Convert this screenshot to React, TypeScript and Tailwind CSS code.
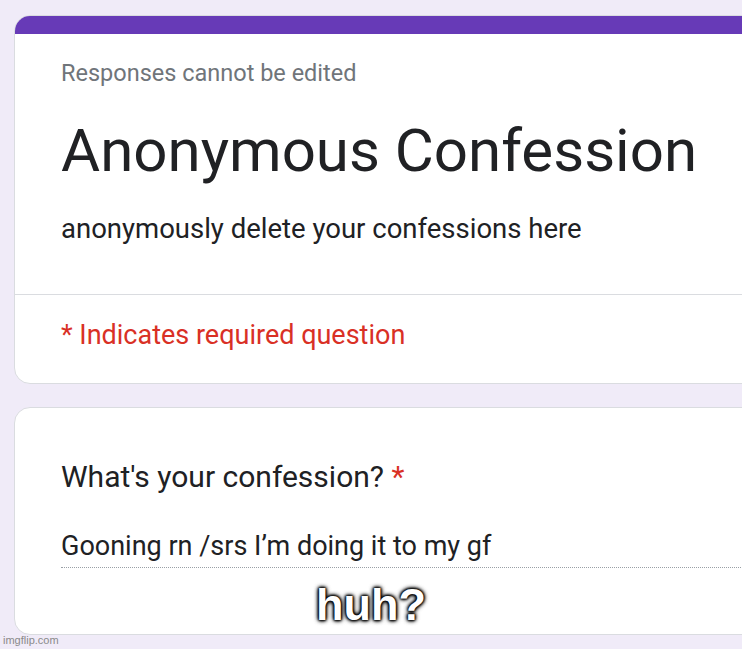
import React from 'react';

const HeaderCard = () => (
  <div className="w-[780px] bg-white border border-[#dadce0] rounded-[16px] overflow-hidden">
    <div className="h-[19px] bg-[#673ab7] -mx-px -mt-px" />
    <div className="pl-[46px] pt-[25px] pb-[48px]">
      <p className="text-[23.5px] leading-[28px] text-[#70757a]">Responses cannot be edited</p>
      <h1 className="mt-[28px] text-[60px] leading-[72px] text-[#202124]">Anonymous Confession</h1>
      <p className="mt-[25px] text-[27.5px] leading-[34px] text-[#202124]">anonymously delete your confessions here</p>
    </div>
    <div className="border-t border-[#dadce0] pl-[46px] pt-[23px] pb-[31px]">
      <p className="text-[27px] leading-[34px] text-[#d93025]">* Indicates required question</p>
    </div>
  </div>
);

const QuestionCard = () => (
  <div className="w-[780px] bg-white border border-[#dadce0] rounded-[16px] pl-[46px] pt-[51px] pb-[66px]">
    <p className="text-[30px] leading-[36px] text-[#202124]">
      What's your confession? <span className="text-[#d93025]">*</span>
    </p>
    <div className="mt-[35px] border-b border-dotted border-[#9aa0a6] pb-[5px]">
      <p className="text-[27px] leading-[32px] text-[#202124]">Gooning rn /srs I’m doing it to my gf</p>
    </div>
  </div>
);

export default function App() {
  return (
    <div className="relative w-[742px] h-[649px] overflow-hidden bg-[#f0ebf8] font-['Roboto',sans-serif]">
      <div className="pl-[14px] pt-[15px] flex flex-col gap-[23px]">
        <HeaderCard />
        <QuestionCard />
      </div>

      {/* meme caption */}
      <div className="absolute left-0 right-0 top-[581px] text-center">
        <span className="inline-block text-[45px] leading-[48px] font-bold text-white font-['Liberation_Sans',sans-serif] [text-shadow:0_0_3px_#000,0_0_3px_#000,0_0_5px_#000,0_0_5px_#000,0_0_2px_#000]">
          huh?
        </span>
      </div>

      <span className="absolute left-[3px] bottom-[3px] text-[11px] leading-[12px] text-[#8a8a8a] font-['Liberation_Sans',sans-serif]">
        imgflip.com
      </span>
    </div>
  );
}
